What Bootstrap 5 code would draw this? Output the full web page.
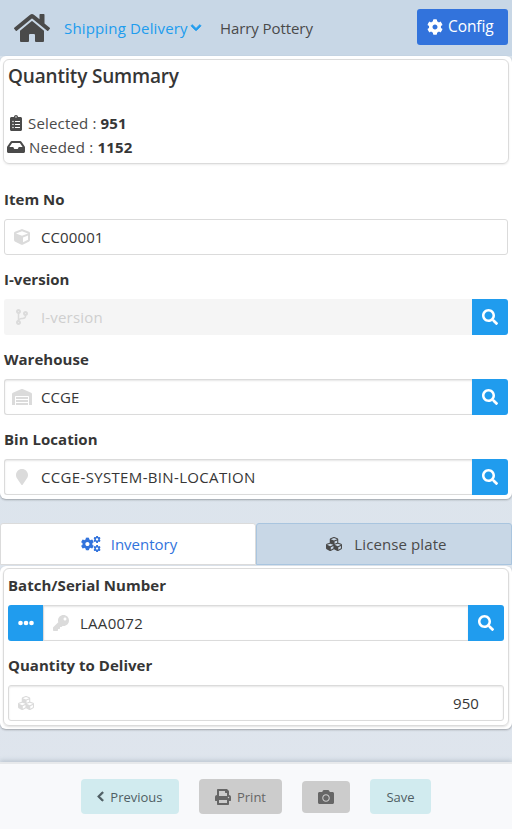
<!DOCTYPE html>
<html lang="en">
<head>
<meta charset="utf-8">
<meta name="viewport" content="width=device-width, initial-scale=1">
<title>Shipping Delivery</title>
<link href="https://cdn.jsdelivr.net/npm/bootstrap@5.3.0/dist/css/bootstrap.min.css" rel="stylesheet">
<style>
body{font:15px/24px "Open Sans","Noto Sans",sans-serif;color:#4a4a4a;background:linear-gradient(#d9e3ec,#dfe5ed);height:829px;overflow:hidden}
.fa-i{height:1em;fill:currentColor;font-size:16px;flex:none;display:block}
.fa-i:not([viewBox]){width:1em}
.bold-i{stroke:currentColor;stroke-width:36px;overflow:visible}
.topbar{height:56px;background:#c8d7e6;padding:0 4px 0 14px}
.home-i{font-size:32px}
.topbar a,.who{text-decoration:none;line-height:24px}
.topbar a{color:#209cee}
.t-ship{width:156px;margin-left:14px;white-space:nowrap;flex:none;letter-spacing:.16px}
.t-ship .chev{font-size:11.5px;margin-left:3px}
.who{letter-spacing:-.08px}
.btn-config{background:#3273dc;color:#fff;height:36px;width:91px;border:0;border-radius:3px;padding:0 0 0 10px;font-size:15.5px;letter-spacing:-.1px;margin-bottom:3px}
.btn-config:hover{background:#3273dc;color:#fff}
.btn-config .fa-i{margin-right:5px}
.panel{background:#fff;border-radius:6px;box-shadow:0 1px 2px rgba(10,10,10,.3)}
.panel-top{height:443px;padding:3px 4px 0}
.summary{height:105px;margin:0 -1px;border:1px solid #dbdbdb;border-radius:6px;padding:3px 4px 0;box-shadow:0 1px 2px rgba(10,10,10,.08)}
.summary h1{font-size:19px;line-height:27px;font-weight:600;color:#363636;margin:0 0 21px;letter-spacing:-.18px}
.summary .row-i{margin-left:-1px}
.summary .row-i svg{margin-right:4px}
.summary .clip{margin-left:3px}
.summary .row-i svg.clip{margin-right:6px}
.t-sel{letter-spacing:.17px}.t-need{letter-spacing:.2px}
.summary b,.lbl{color:#363636;font-weight:700}
.fields{padding-top:23px}
.lbl{display:block;height:24px;margin-bottom:8px;letter-spacing:.03px}
.fld{height:36px;margin-bottom:12px}
.inp{height:36px;border:1px solid #dbdbdb;border-radius:3px;background:#fff;color:#363636;min-width:0;box-shadow:inset 0 1px 2px rgba(10,10,10,.1)}
.inp.flat{box-shadow:none}
.inp.off{background:#f5f5f5;border-color:#f5f5f5;color:#cfcfcf;box-shadow:none}
.inp .slot{width:36px;margin-left:-1px;color:#dbdbdb;flex:none}
.inp .val{margin-left:1px;white-space:nowrap;letter-spacing:.1px}
.inp .v2{letter-spacing:.17px}
.inp .v4{letter-spacing:.34px}
.inp .v5{letter-spacing:.28px}
.sq{width:36px;height:36px;background:#209cee;color:#fff;border:0;padding:0;flex:none;display:flex;align-items:center;justify-content:center}
.has-r{border-top-right-radius:0;border-bottom-right-radius:0;border-right:0}
.has-l{border-top-left-radius:0;border-bottom-left-radius:0}
.sq-r{border-radius:0 3px 3px 0}.sq-l{border-radius:3px 0 0 3px;width:35px}
.tabbar{margin-top:24px;height:42px}
.tab-b{border:1px solid #dbdbdb;border-radius:3px 3px 0 0;background:#fff;color:#3273dc;width:256px;text-decoration:none;padding-left:2px}
.tab-b.idle{background:#c8d7e6;border-color:#a9c5df;color:#4a4a4a;padding-left:5px;letter-spacing:.1px}
.tab-i{margin-right:10px}
.idle .tab-i{margin-right:12px}
.panel-low{padding:2px 3px 3px;margin-top:1px;height:163px}
.inner{border:1px solid #dbdbdb;border-radius:6px;padding:4px 4px 0;height:158px;box-shadow:0 1px 2px rgba(10,10,10,.12)}
.foot{height:67px;border-top:2px solid #e7e9eb;background:#f8f9fb;box-shadow:0 -2px 4px rgba(100,120,140,.25);gap:20px}
.act{height:35px;border:0;border-radius:4px;padding:0;font-size:13px;color:#4f5e64;background:#d1ebef;display:flex;align-items:center;justify-content:center}
.act.dim{background:#ccc;color:#666}
.w-prev{width:98px}.w-print{width:83px}.w-cam{width:48px;height:32px}.w-save{width:61px}
.w-prev .fa-i{font-size:11px;margin-right:6px}.w-print .fa-i{margin-right:6px}
</style>
<script src="https://cdn.jsdelivr.net/npm/bootstrap@5.3.0/dist/js/bootstrap.bundle.min.js"></script>
</head>
<body class="d-flex flex-column">
<svg class="d-none">
<symbol id="cog" viewBox="0 0 512 512"><path d="M487.4 315.7l-42.6-24.6c4.3-23.2 4.3-47 0-70.2l42.6-24.6c4.9-2.8 7.1-8.6 5.5-14-11.1-35.6-30-67.8-54.7-94.6-3.8-4.1-10-5.1-14.8-2.3L380.8 110c-17.9-15.4-38.5-27.3-60.8-35.1V25.8c0-5.6-3.9-10.5-9.4-11.7-36.7-8.2-74.3-7.8-109.2 0-5.5 1.2-9.4 6.1-9.4 11.7V75c-22.2 7.9-42.8 19.8-60.8 35.1L88.7 85.5c-4.9-2.8-11-1.9-14.8 2.3-24.7 26.7-43.6 58.9-54.7 94.6-1.7 5.4.6 11.2 5.5 14L67.3 221c-4.3 23.2-4.3 47 0 70.2l-42.6 24.6c-4.9 2.8-7.1 8.6-5.5 14 11.1 35.6 30 67.8 54.7 94.6 3.8 4.1 10 5.1 14.8 2.3l42.6-24.6c17.9 15.4 38.5 27.3 60.8 35.1v49.2c0 5.6 3.9 10.5 9.4 11.7 36.7 8.2 74.3 7.8 109.2 0 5.5-1.2 9.4-6.1 9.4-11.7v-49.2c22.2-7.9 42.8-19.8 60.8-35.1l42.6 24.6c4.9 2.8 11 1.9 14.8-2.3 24.7-26.7 43.6-58.9 54.7-94.6 1.5-5.5-.7-11.3-5.6-14.1zM256 336c-44.1 0-80-35.9-80-80s35.9-80 80-80 80 35.9 80 80-35.9 80-80 80z"/></symbol>
<symbol id="search" viewBox="0 0 512 512"><path d="M505 442.7L405.3 343c-4.5-4.5-10.6-7-17-7H372c27.6-35.3 44-79.7 44-128C416 93.1 322.9 0 208 0S0 93.1 0 208s93.1 208 208 208c48.3 0 92.7-16.4 128-44v16.3c0 6.4 2.5 12.5 7 17l99.7 99.7c9.4 9.4 24.6 9.4 33.9 0l28.3-28.3c9.4-9.4 9.4-24.6.1-34zM208 336c-70.7 0-128-57.2-128-128 0-70.7 57.2-128 128-128 70.7 0 128 57.2 128 128 0 70.7-57.2 128-128 128z"/></symbol>
<symbol id="cubes" viewBox="0 0 512 512"><path d="M488.6 250.2L392 214V105.5c0-15-9.3-28.4-23.4-33.7l-100-37.5c-8.1-3.1-17.1-3.1-25.3 0l-100 37.5c-14.1 5.3-23.4 18.7-23.4 33.7V214l-96.6 36.2C9.3 255.5 0 268.9 0 283.9V394c0 13.6 7.7 26.1 19.9 32.2l100 50c10.1 5.1 22.1 5.1 32.2 0l103.9-52 103.9 52c10.1 5.1 22.1 5.1 32.2 0l100-50c12.2-6.1 19.9-18.6 19.9-32.2V283.9c0-15-9.3-28.4-23.4-33.7zM358 214.8l-85 31.9v-68.2l85-37v73.3zM154 104.1l102-38.2 102 38.2v.6l-102 41.4-102-41.4v-.6zm84 291.1l-85 42.5v-79.1l85-38.8v75.4zm0-112l-102 41.4-102-41.4v-.6l102-38.2 102 38.2v.6zm240 112l-85 42.5v-79.1l85-38.8v75.4zm0-112l-102 41.4-102-41.4v-.6l102-38.2 102 38.2v.6z"/></symbol>
</svg>

<nav class="topbar d-flex align-items-center">
  <svg class="fa-i home-i" viewBox="0 0 576 512"><path d="M280.37 148.26L96 300.11V464a16 16 0 0 0 16 16l112.06-.29a16 16 0 0 0 15.92-16V368a16 16 0 0 1 16-16h64a16 16 0 0 1 16 16v95.64a16 16 0 0 0 16 16.05L464 480a16 16 0 0 0 16-16V300L295.67 148.26a12.19 12.19 0 0 0-15.3 0zM571.6 251.47L488 182.56V44.05a12 12 0 0 0-12-12h-56a12 12 0 0 0-12 12v72.61L318.47 43a48 48 0 0 0-61 0L4.34 251.47a12 12 0 0 0-1.6 16.9l25.5 31A12 12 0 0 0 45.15 301l235.22-193.74a12.19 12.19 0 0 1 15.3 0L530.9 301a12 12 0 0 0 16.9-1.6l25.5-31a12 12 0 0 0-1.7-16.93z"/></svg>
  <a href="#" class="d-flex align-items-center t-ship"><span>Shipping Delivery</span><svg class="fa-i chev bold-i" viewBox="0 0 448 512"><path d="M207.029 381.476L12.686 187.132c-9.373-9.373-9.373-24.569 0-33.941l22.667-22.667c9.357-9.357 24.522-9.375 33.901-.04L224 284.505l154.745-154.021c9.379-9.335 24.544-9.317 33.901.04l22.667 22.667c9.373 9.373 9.373 24.569 0 33.941L240.971 381.476c-9.373 9.372-24.569 9.372-33.942 0z"/></svg></a>
  <span class="who">Harry Pottery</span>
  <button class="btn btn-config ms-auto d-flex align-items-center"><svg class="fa-i"><use href="#cog"/></svg><span>Config</span></button>
</nav>

<main class="panel panel-top">
  <section class="summary">
    <h1>Quantity Summary</h1>
    <div class="row-i d-flex align-items-center"><svg class="fa-i clip" viewBox="0 0 384 512"><path d="M336 64h-80c0-35.3-28.7-64-64-64s-64 28.7-64 64H48C21.5 64 0 85.5 0 112v352c0 26.5 21.5 48 48 48h288c26.5 0 48-21.5 48-48V112c0-26.5-21.5-48-48-48zM96 424c-13.3 0-24-10.7-24-24s10.7-24 24-24 24 10.7 24 24-10.7 24-24 24zm0-96c-13.3 0-24-10.7-24-24s10.7-24 24-24 24 10.7 24 24-10.7 24-24 24zm0-96c-13.3 0-24-10.7-24-24s10.7-24 24-24 24 10.7 24 24-10.7 24-24 24zm96-192c13.3 0 24 10.7 24 24s-10.7 24-24 24-24-10.7-24-24 10.7-24 24-24zm128 368c0 4.4-3.6 8-8 8H168c-4.4 0-8-3.6-8-8v-16c0-4.4 3.6-8 8-8h144c4.4 0 8 3.6 8 8v16zm0-96c0 4.4-3.6 8-8 8H168c-4.4 0-8-3.6-8-8v-16c0-4.4 3.6-8 8-8h144c4.4 0 8 3.6 8 8v16zm0-96c0 4.4-3.6 8-8 8H168c-4.4 0-8-3.6-8-8v-16c0-4.4 3.6-8 8-8h144c4.4 0 8 3.6 8 8v16z"/></svg><span class="t-sel">Selected : <b>951</b></span></div>
    <div class="row-i d-flex align-items-center"><svg class="fa-i" viewBox="0 0 576 512"><path d="M567.938 243.908L462.25 85.374A48.003 48.003 0 0 0 422.311 64H153.689a48 48 0 0 0-39.938 21.374L8.062 243.908A47.994 47.994 0 0 0 0 270.533V400c0 26.51 21.49 48 48 48h480c26.51 0 48-21.49 48-48V270.533a47.994 47.994 0 0 0-8.062-26.625zM162.252 128h251.497l85.333 128H376l-32 64H232l-32-64H76.918l85.334-128z"/></svg><span class="t-need">Needed : <b>1152</b></span></div>
  </section>

  <section class="fields">
    <label class="lbl">Item No</label>
    <div class="fld d-flex"><div class="inp flat flex-grow-1 d-flex align-items-center"><span class="slot d-flex justify-content-center"><svg class="fa-i" viewBox="0 0 512 512"><path d="M239.1 6.3l-208 78c-18.7 7-31.1 25-31.1 45v225.1c0 18.2 10.3 34.8 26.5 42.9l208 104c13.5 6.8 29.4 6.8 42.9 0l208-104c16.3-8.1 26.5-24.8 26.5-42.9V129.3c0-20-12.4-37.9-31.1-44.9l-208-78C262 2.2 250 2.2 239.1 6.3zM256 68.4l192 72v1.1l-192 78-192-78v-1.1l192-72zm32 356V275.5l160-65v133.9l-160 80z"/></svg></span><span class="val v1">CC00001</span></div></div>

    <label class="lbl">I-version</label>
    <div class="fld d-flex"><div class="inp off has-r flex-grow-1 d-flex align-items-center"><span class="slot d-flex justify-content-center"><svg class="fa-i" viewBox="0 0 384 512"><path d="M384 144c0-44.2-35.8-80-80-80s-80 35.8-80 80c0 36.4 24.3 67.1 57.5 76.8-.6 16.1-4.2 28.5-11 36.9-15.4 19.2-49.3 22.4-85.2 25.7-28.2 2.6-57.4 5.4-81.3 16.9v-144c32.5-10.2 56-40.5 56-76.3 0-44.2-35.8-80-80-80S0 35.8 0 80c0 35.8 23.5 66.1 56 76.3v199.3C23.5 365.9 0 396.2 0 432c0 44.2 35.8 80 80 80s80-35.8 80-80c0-34-21.2-63.1-51.2-74.6 3.1-5.2 7.8-9.8 14.9-13.4 16.2-8.2 40.4-10.4 66.1-12.8 42.2-3.9 90-8.4 118.2-43.4 14-17.4 21.1-39.8 21.6-67.9 31.6-10.8 54.4-40.7 54.4-75.9zM80 64c8.8 0 16 7.2 16 16s-7.2 16-16 16-16-7.2-16-16 7.2-16 16-16zm0 384c-8.8 0-16-7.2-16-16s7.2-16 16-16 16 7.2 16 16-7.2 16-16 16zm224-320c8.8 0 16 7.2 16 16s-7.2 16-16 16-16-7.2-16-16 7.2-16 16-16z"/></svg></span><span class="val v2">I-version</span></div><button class="sq sq-r"><svg class="fa-i"><use href="#search"/></svg></button></div>

    <label class="lbl">Warehouse</label>
    <div class="fld d-flex"><div class="inp has-r flex-grow-1 d-flex align-items-center"><span class="slot d-flex justify-content-center"><svg class="fa-i" viewBox="0 0 640 512"><path d="M504 352H136.4c-4.4 0-8 3.6-8 8l-.1 48c0 4.4 3.6 8 8 8H504c4.4 0 8-3.6 8-8v-48c0-4.4-3.6-8-8-8zm0 96H136.1c-4.4 0-8 3.6-8 8l-.1 48c0 4.4 3.6 8 8 8h368c4.4 0 8-3.6 8-8v-48c0-4.4-3.6-8-8-8zm0-192H136.6c-4.4 0-8 3.6-8 8l-.1 48c0 4.4 3.6 8 8 8H504c4.4 0 8-3.6 8-8v-48c0-4.4-3.6-8-8-8zm106.5-139L338.4 3.7a48.15 48.15 0 0 0-36.9 0L29.5 117C11.7 124.5 0 141.9 0 161.3V504c0 4.4 3.6 8 8 8h80c4.4 0 8-3.6 8-8V256c0-17.6 14.6-32 32.6-32h382.8c18 0 32.6 14.4 32.6 32v248c0 4.4 3.6 8 8 8h80c4.4 0 8-3.6 8-8V161.3c0-19.4-11.7-36.8-29.5-44.3z"/></svg></span><span class="val v3">CCGE</span></div><button class="sq sq-r"><svg class="fa-i"><use href="#search"/></svg></button></div>

    <label class="lbl">Bin Location</label>
    <div class="fld d-flex"><div class="inp has-r flex-grow-1 d-flex align-items-center"><span class="slot d-flex justify-content-center"><svg class="fa-i" viewBox="0 0 384 512"><path d="M172.268 501.67C26.97 291.031 0 269.413 0 192 0 85.961 85.961 0 192 0s192 85.961 192 192c0 77.413-26.97 99.031-172.268 309.67-9.535 13.774-29.93 13.773-39.464 0z"/></svg></span><span class="val v4">CCGE-SYSTEM-BIN-LOCATION</span></div><button class="sq sq-r"><svg class="fa-i"><use href="#search"/></svg></button></div>
  </section>
</main>

<div class="tabbar d-flex">
  <a href="#" class="tab-b d-flex align-items-center justify-content-center"><svg class="fa-i tab-i" viewBox="0 0 640 512"><use href="#cog" x="-8" y="42" width="428" height="428"/><use href="#cog" x="394" y="-10" width="240" height="240"/><use href="#cog" x="394" y="282" width="240" height="240"/></svg><span>Inventory</span></a>
  <a href="#" class="tab-b idle d-flex align-items-center justify-content-center"><svg class="fa-i tab-i"><use href="#cubes"/></svg><span>License plate</span></a>
</div>

<section class="panel panel-low">
  <div class="inner">
    <label class="lbl">Batch/Serial Number</label>
    <div class="fld d-flex"><button class="sq sq-l"><svg class="fa-i" viewBox="0 0 512 512"><circle cx="80" cy="256" r="74"/><circle cx="256" cy="256" r="74"/><circle cx="432" cy="256" r="74"/></svg></button><div class="inp has-l has-r flex-grow-1 d-flex align-items-center"><span class="slot d-flex justify-content-center"><svg class="fa-i" viewBox="0 0 512 512"><path d="M512 176.001C512 273.203 433.202 352 336 352c-11.22 0-22.19-1.062-32.827-3.069l-24.012 27.014A23.999 23.999 0 0 1 261.223 384H224v40c0 13.255-10.745 24-24 24h-40v40c0 13.255-10.745 24-24 24H24c-13.255 0-24-10.745-24-24v-78.059c0-6.365 2.529-12.47 7.029-16.971l161.802-161.802C163.108 213.814 160 195.271 160 176 160 78.798 238.797.001 335.999 0 433.488-.001 512 78.511 512 176.001zM336 128c0 26.51 21.49 48 48 48s48-21.49 48-48-21.49-48-48-48-48 21.49-48 48z"/></svg></span><span class="val v5">LAA0072</span></div><button class="sq sq-r"><svg class="fa-i"><use href="#search"/></svg></button></div>
    <label class="lbl">Quantity to Deliver</label>
    <div class="fld d-flex"><div class="inp flex-grow-1 d-flex align-items-center"><span class="slot d-flex justify-content-center"><svg class="fa-i"><use href="#cubes"/></svg></span><span class="val v6 ms-auto me-4">950</span></div></div>
  </div>
</section>

<footer class="foot mt-auto d-flex align-items-center justify-content-center">
  <button class="act w-prev"><svg class="fa-i bold-i" viewBox="0 0 320 512"><path d="M34.52 239.03L228.87 44.69c9.37-9.37 24.57-9.37 33.94 0l22.67 22.67c9.36 9.36 9.37 24.52.04 33.9L131.49 256l154.02 154.75c9.34 9.38 9.32 24.54-.04 33.9l-22.67 22.67c-9.37 9.37-24.57 9.37-33.94 0L34.52 272.97c-9.37-9.37-9.37-24.57 0-33.94z"/></svg><span>Previous</span></button>
  <button class="act dim w-print"><svg class="fa-i" viewBox="0 0 512 512"><path d="M448 192V77.25c0-8.49-3.37-16.62-9.37-22.63L393.37 9.37c-6-6-14.14-9.37-22.63-9.37H96C78.33 0 64 14.33 64 32v160c-35.35 0-64 28.65-64 64v112c0 8.84 7.16 16 16 16h48v96c0 17.67 14.33 32 32 32h320c17.67 0 32-14.33 32-32v-96h48c8.84 0 16-7.16 16-16V256c0-35.35-28.65-64-64-64zm-64 256H128v-96h256v96zm0-224H128V64h192v48c0 8.84 7.16 16 16 16h48v96zm48 72c-13.25 0-24-10.75-24-24 0-13.26 10.75-24 24-24s24 10.74 24 24c0 13.25-10.75 24-24 24z"/></svg><span>Print</span></button>
  <button class="act dim w-cam"><svg class="fa-i" viewBox="0 0 512 512"><path d="M512 144v288c0 26.5-21.5 48-48 48H48c-26.5 0-48-21.5-48-48V144c0-26.5 21.5-48 48-48h88l12.3-32.9c7-18.7 24.9-31.1 44.9-31.1h125.5c20 0 37.9 12.4 44.9 31.1L376 96h88c26.5 0 48 21.5 48 48zM376 288c0-66.2-53.8-120-120-120s-120 53.8-120 120 53.8 120 120 120 120-53.8 120-120zm-32 0c0 48.5-39.5 88-88 88s-88-39.5-88-88 39.5-88 88-88 88 39.5 88 88z"/></svg></button>
  <button class="act w-save"><span>Save</span></button>
</footer>
</body>
</html>
